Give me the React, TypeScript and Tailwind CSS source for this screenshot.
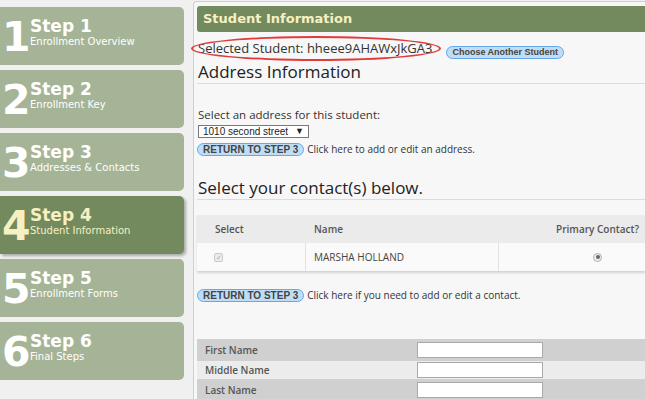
import React from "react";

const steps = [
  { n: "1", sub: "Enrollment Overview" },
  { n: "2", sub: "Enrollment Key" },
  { n: "3", sub: "Addresses & Contacts" },
  { n: "4", sub: "Student Information", active: true },
  { n: "5", sub: "Enrollment Forms" },
  { n: "6", sub: "Final Steps" },
];

const Pill = ({ children, small }: { children: React.ReactNode; small?: boolean }) => (
  <span
    className={
      small
        ? "inline-flex items-center h-[13px] px-[5px] rounded-full border border-[#62a8ea] bg-[#c1ddf6] text-[9px] font-bold text-[#444] leading-none font-['Liberation_Sans',sans-serif]"
        : "inline-flex items-center h-[13px] px-[5px] rounded-full border border-[#62a8ea] bg-[#c1ddf6] text-[10px] font-bold text-[#444] leading-none font-['Liberation_Sans',sans-serif]"
    }
  >
    {children}
  </span>
);

const App = () => {
  return (
    <div className="w-[645px] h-[399px] overflow-hidden bg-[#f0f0f0] flex font-['DejaVu_Sans',sans-serif] text-[#333]">
      {/* sidebar */}
      <div className="w-[193px] shrink-0 flex flex-col gap-[5px] pt-[7px] pr-[9px]">
        {steps.map((s) => (
          <div
            key={s.n}
            className={
              s.active
                ? "h-[58px] rounded-r-[5px] bg-[#728a5d] shadow-[2px_2px_3px_rgba(0,0,0,0.3)] flex items-start pt-[9px] text-[#f6f0c2]"
                : "h-[58px] rounded-r-[5px] bg-[#a5b497] flex items-start pt-[9px] text-white"
            }
          >
            <span className="text-[41px] font-bold leading-none w-[30px] pl-[2px] mt-[1px] tracking-[-1px]">{s.n}</span>
            <div className="flex flex-col">
              <span className="text-[17px] font-bold leading-[20px]">Step {s.n}</span>
              <span className="text-[10px] leading-[11px]">{s.sub}</span>
            </div>
          </div>
        ))}
      </div>

      {/* main panel */}
      <div className="relative flex-1 mt-[1px] border-l border-t border-[#cfcfcf] rounded-tl-[4px] bg-[#f7f7f7] pl-[3px] pt-[4px] font-['Open_Sans',sans-serif]">
        <div className="h-[26px] rounded-l-[3px] bg-[#728a5d] flex items-center pl-[6px] text-[13px] font-bold text-[#f6f0c2] font-['DejaVu_Sans',sans-serif]">
          Student Information
        </div>

        <div className="flex items-center mt-[8px] pl-[1px] h-[18px]">
          <span className="text-[13px] text-[#333]">Selected Student: hheee9AHAWxJkGA3</span>
          <span className="ml-[14px]">
            <Pill small>Choose Another Student</Pill>
          </span>
        </div>
        <div className="absolute left-[-3px] top-[34px] w-[250px] h-[25px] rounded-[50%] border-2 border-[#e23b3b]" />

        <div className="text-[17px] leading-[22px] mt-[3px] pl-[1px] text-[#222]">Address Information</div>
        <div className="border-b border-[#dcdcdc]" />

        <div className="text-[11.5px] mt-[22px] pl-[1px] text-[#333]">Select an address for this student:</div>
        <div className="mt-[2px] pl-[1px]">
          <div className="w-[111px] h-[13px] border border-[#777] bg-white flex items-center px-[4px] text-[10px] leading-none text-[#222] font-['Liberation_Sans',sans-serif]">
            1010 second street
            <span className="ml-auto text-[9px]">▼</span>
          </div>
        </div>
        <div className="flex items-center mt-[4px] gap-[3px]">
          <Pill>RETURN TO STEP 3</Pill>
          <span className="text-[10px] text-[#333]">Click here to add or edit an address.</span>
        </div>

        <div className="text-[17px] leading-[22px] mt-[20px] pl-[1px] text-[#222]">Select your contact(s) below.</div>
        <div className="border-b border-[#dcdcdc]" />

        <div className="mt-[15px] shadow-[0_2px_2px_rgba(0,0,0,0.15)]">
          <div className="h-[28px] bg-[#ebebeb] flex items-center text-[10px] font-semibold text-[#555]">
            <span className="w-[109px] pl-[18px]">Select</span>
            <span className="flex-1 pl-[8px]">Name</span>
            <span className="pr-[6px]">Primary Contact?</span>
          </div>
          <div className="h-[28px] bg-[#fafafa] flex text-[10px] text-[#444]">
            <div className="w-[109px] flex items-center pl-[17px] border-r border-[#e2e2e2]">
              <span className="w-[9px] h-[9px] rounded-[2px] border border-[#c8c8c8] bg-[#ececec] text-[7px] leading-none flex items-center justify-center text-[#aaa]">✓</span>
            </div>
            <div className="w-[193px] flex items-center pl-[8px] border-r border-[#e2e2e2]">MARSHA HOLLAND</div>
            <div className="flex-1 flex items-center pl-[94px]">
              <span className="w-[9px] h-[9px] rounded-full border border-[#b0b0b0] bg-[#eee] flex items-center justify-center">
                <span className="w-[4px] h-[4px] rounded-full bg-[#666]" />
              </span>
            </div>
          </div>
        </div>

        <div className="flex items-center mt-[17px] gap-[3px]">
          <Pill>RETURN TO STEP 3</Pill>
          <span className="text-[10px] text-[#333]">Click here if you need to add or edit a contact.</span>
        </div>

        <div className="mt-[36px] text-[10px] font-semibold text-[#555]">
          <div className="h-[22px] bg-[#d0d0d0] flex items-center">
            <span className="w-[220px] pl-[8px]">First Name</span>
            <span className="w-[126px] h-[16px] border border-[#a9a9a9] bg-white" />
          </div>
          <div className="h-[18px] bg-[#ececec] flex items-center">
            <span className="w-[220px] pl-[8px]">Middle Name</span>
            <span className="w-[126px] h-[16px] border border-[#a9a9a9] bg-white" />
          </div>
          <div className="h-[22px] bg-[#d0d0d0] flex items-center">
            <span className="w-[220px] pl-[8px]">Last Name</span>
            <span className="w-[126px] h-[16px] border border-[#a9a9a9] bg-white" />
          </div>
        </div>
      </div>
    </div>
  );
};

export default App;
